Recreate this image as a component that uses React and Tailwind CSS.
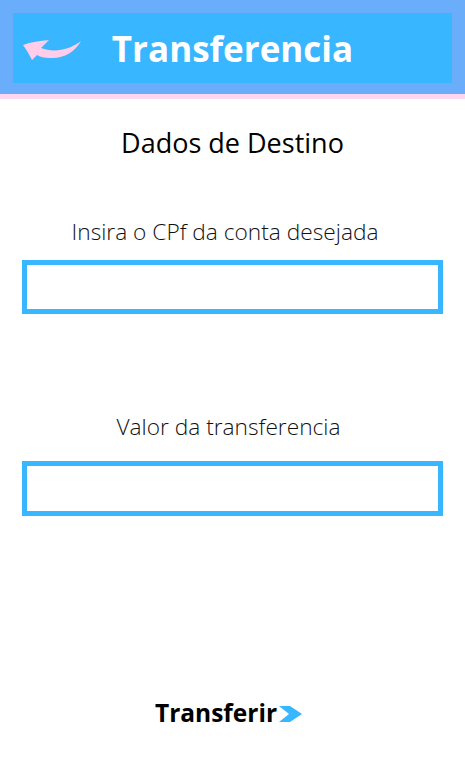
export default function App() {
  return (
    <div className="w-[465px] h-[760px] bg-white flex flex-col" style={{ fontFamily: '"Open Sans", sans-serif' }}>
      <div className="bg-[#6aaefb] pt-[13px] pb-[11px] px-[13px] border-b-[5px] border-[#ffd6f0]">
        <div className="bg-[#38b6ff] h-[70px] grid grid-cols-[1fr_auto_1fr] items-center">
          <div className="pl-[10px] flex items-center pt-[2px]">
            <svg width="59" height="23" viewBox="0 0 59 23">
              <path d="M0 7 C 8 4, 17 3, 26 2 L 18 10 C 31 15, 46 12, 58 3 C 52 14, 40 21, 27 20 C 21 20, 17 19, 14 17 L 9 22 C 6 16, 3 11, 0 7 Z" fill="#ffcdea" />
            </svg>
          </div>
          <div className="text-white font-bold text-[35px] leading-[35px]">Transferencia</div>
          <div />
        </div>
      </div>
      <div className="flex flex-col items-center pt-[26px]">
        <div className="text-black text-[27px] leading-[36px]">Dados de Destino</div>
        <div className="mt-[56px] pr-[15px] text-[#111] font-light text-[22.7px] leading-[30px]">Insira o CPf da conta desejada</div>
        <div className="mt-[13px] w-[421px] h-[54px] border-[5px] border-[#38b6ff]" />
        <div className="mt-[98px] pr-[8px] text-[#111] font-light text-[22.7px] leading-[30px]">Valor da transferencia</div>
        <div className="mt-[19px] w-[421px] h-[55px] border-[5px] border-[#38b6ff]" />
      </div>
      <div className="flex-1" />
      <div className="flex items-center justify-center pb-[35px] pr-[8px]">
        <span className="font-bold text-black text-[24.5px] leading-[24px]">Transferir</span>
        <svg width="23" height="16" viewBox="0 0 23 16" className="ml-[2px] mt-[2px]">
          <path d="M0 0 L 11 0 L 23 8 L 11 16 L 0 16 L 10 8 Z" fill="#38b6ff" />
        </svg>
      </div>
    </div>
  );
}
